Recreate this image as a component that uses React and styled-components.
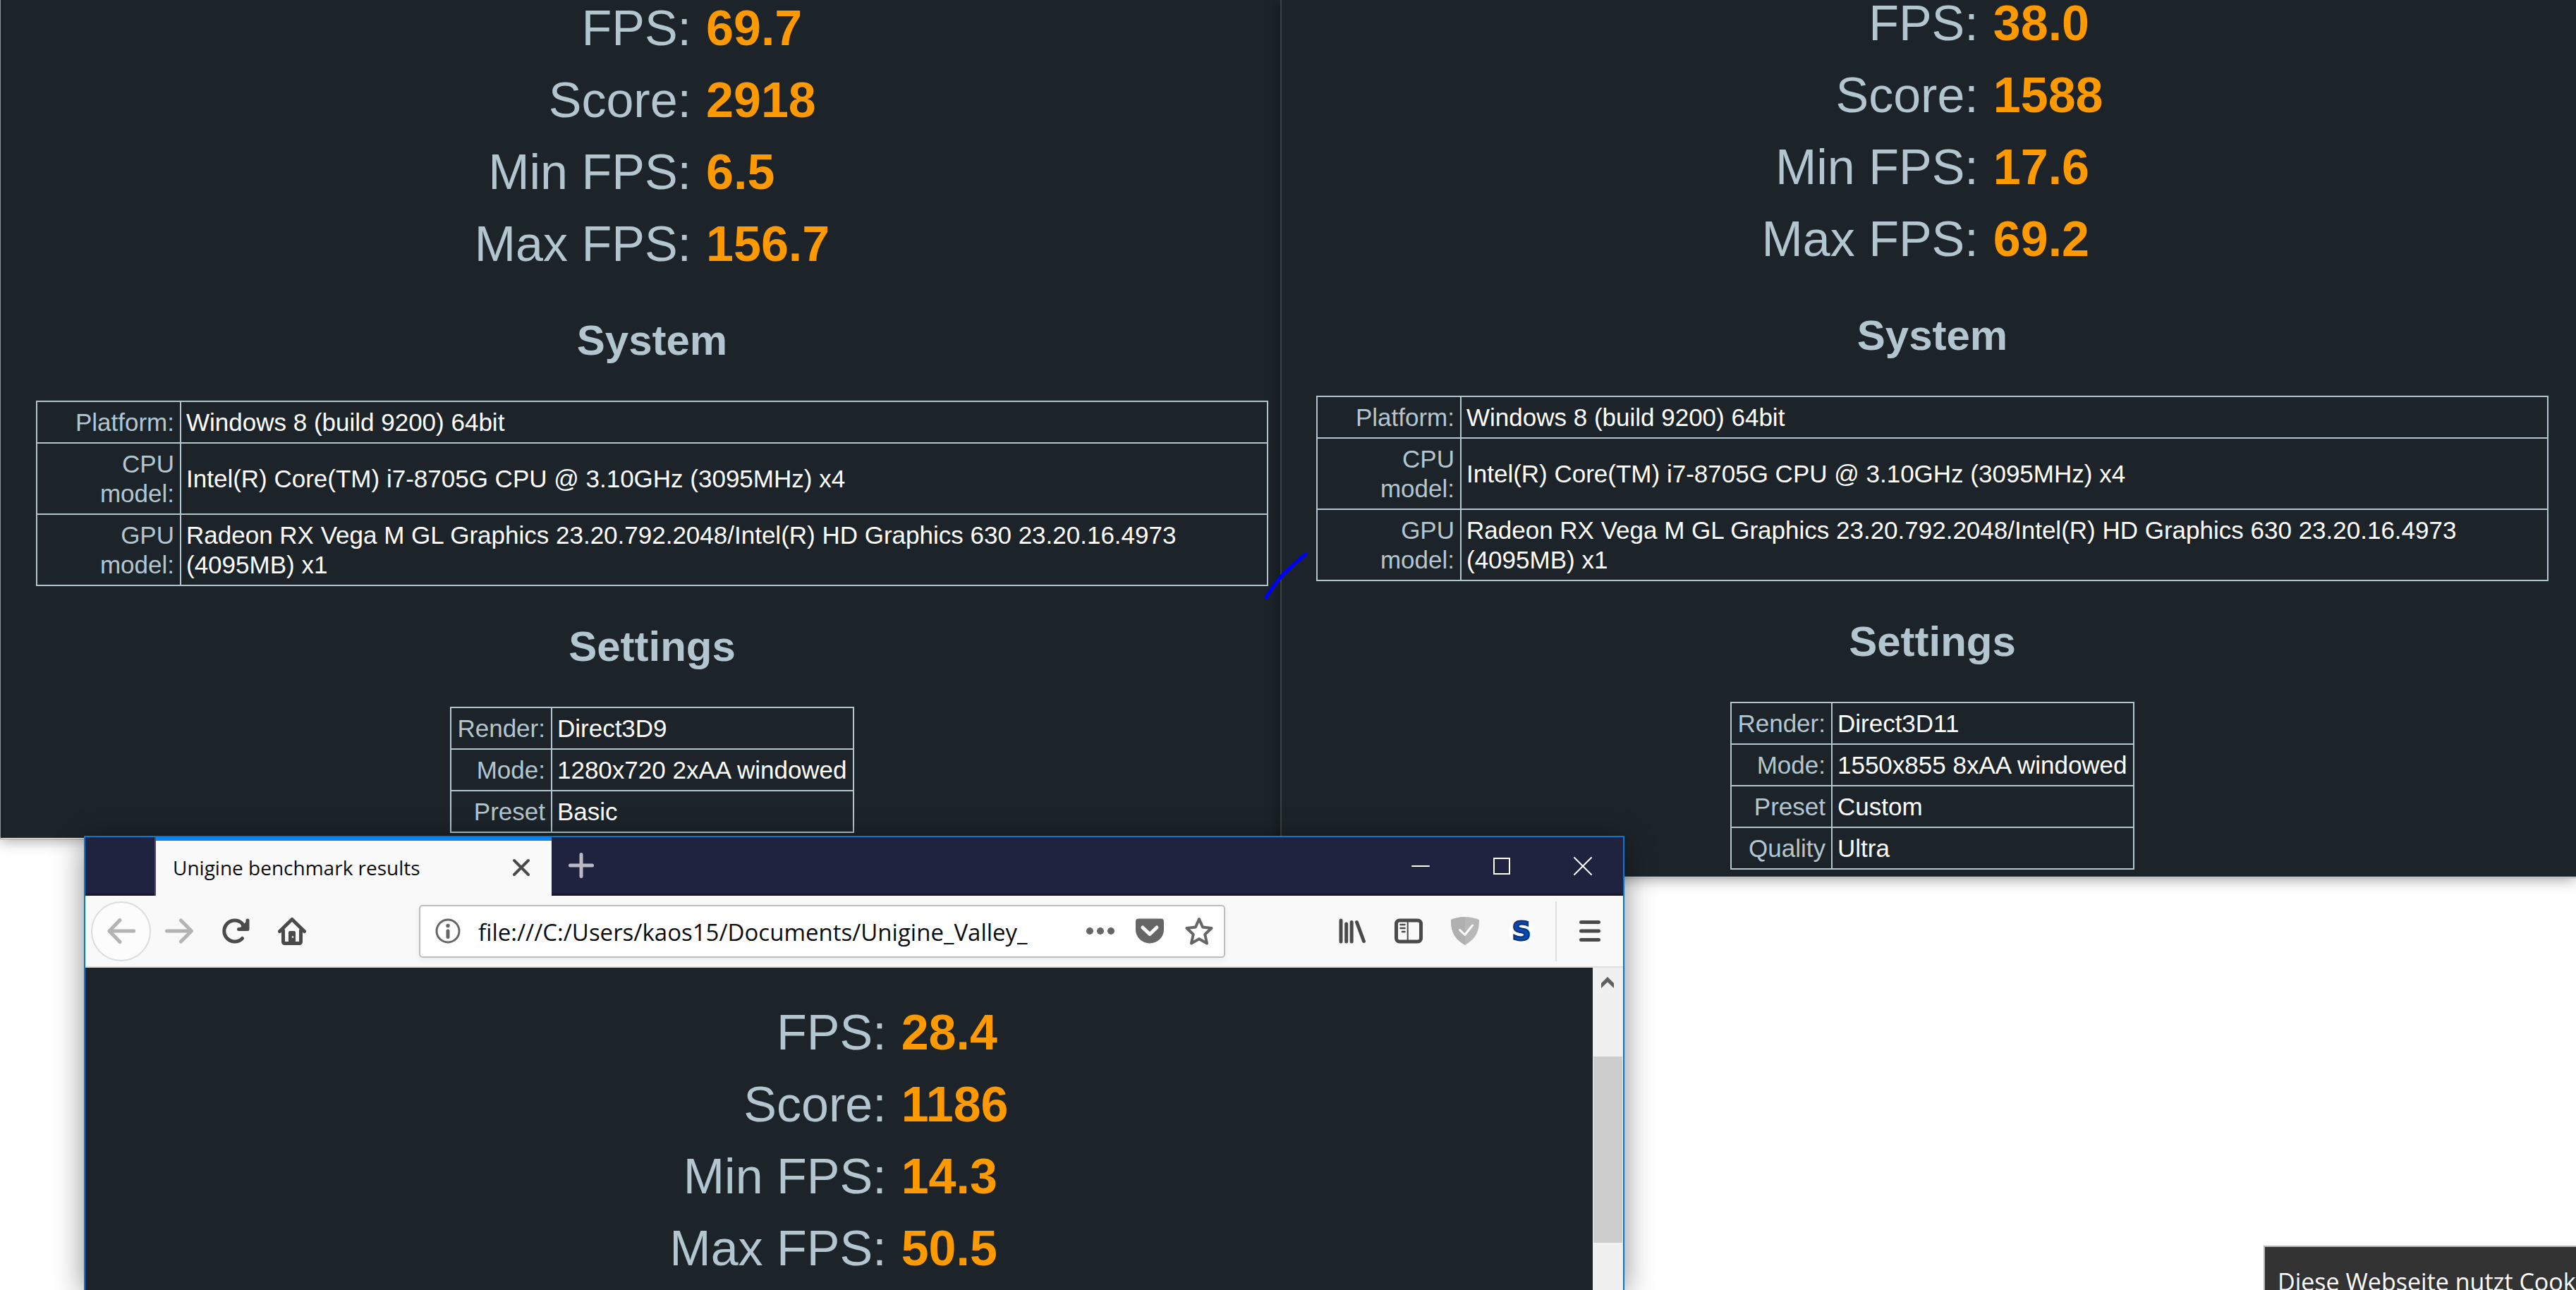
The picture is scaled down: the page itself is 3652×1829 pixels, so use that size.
import React from "react";
import styled, { createGlobalStyle } from "styled-components";

const GlobalStyle = createGlobalStyle`
  * {
    box-sizing: border-box;
  }
  body {
    margin: 0;
    background-color: #ffffff;
    font-family: "Liberation Sans", Arial, sans-serif;
  }
  button {
    padding: 0;
    border: none;
    background: none;
    font: inherit;
    cursor: pointer;
  }
`;

const Desktop = styled.main`
  position: relative;
  height: 100vh;
  overflow: hidden;
`;

const Panes = styled.div`
  display: grid;
  grid-template-columns: 1815fr 1837fr;
  align-items: start;
`;

const Pane = styled.section`
  position: relative;
  z-index: ${props => (props.$front ? 1 : 0)};
  padding: ${props => (props.$front ? "0 39px 10px 49px" : "0 17px 7px 50px")};
  border-left: ${props => (props.$front ? "2px solid #3a3f40" : "1px solid #8f9496")};
  border-bottom: 1px solid #ffffff;
  background-color: #1c242a;
  box-shadow: 0 1px 0 #999999, 0 2px 20px rgba(0, 0, 0, 0.4);
  overflow: hidden;
`;

const ScoreTable = styled.table`
  margin: ${props => props.$shift}px auto 0;
  border-collapse: collapse;
  font-size: 70px;
  line-height: 102px;
  white-space: nowrap;
`;

const ScoreLabel = styled.th`
  padding: 0 10px 0 8px;
  color: #b3c6d0;
  font-weight: 400;
  text-align: right;
`;

const ScoreValue = styled.td`
  padding: 0 8px 0 11px;
  color: #ff9900;
  font-weight: 700;
`;

const Heading = styled.h2`
  margin: 52px 0 51px;
  color: #b3c6d0;
  font-size: 60px;
  line-height: 68px;
  text-align: center;
`;

const InfoTable = styled.table`
  width: ${props => (props.$wide ? "100%" : "auto")};
  margin: 0 auto;
  border-collapse: collapse;
  font-size: 35px;
  line-height: 42px;

  th,
  td {
    padding: 8px 8px 7px;
    border: 2px solid #b3c6d0;
  }
  th {
    width: ${props => (props.$wide ? "204px" : "auto")};
    color: #b3c6d0;
    font-weight: 400;
    text-align: right;
  }
  td {
    padding-left: 7px;
    color: #ffffff;
  }
`;

const PenStroke = styled.svg`
  position: absolute;
  z-index: 2;
  top: 783px;
  left: 1792px;
`;

const Browser = styled.section`
  position: absolute;
  z-index: 3;
  top: 1185px;
  bottom: 0;
  left: 119px;
  width: 59.8%;
  display: flex;
  flex-direction: column;
  border: solid #0078d7;
  border-width: 2px 2px 0;
  background-color: #f9f9fa;
  box-shadow: 0 6px 40px rgba(0, 0, 0, 0.45);
`;

const TabStrip = styled.header`
  display: flex;
  height: 83px;
  padding-left: 100px;
  background-color: #202340;
  box-shadow: inset 0 -3px 0 #17182d;
`;

const Tab = styled.div`
  display: flex;
  align-items: center;
  justify-content: space-between;
  width: 561px;
  padding: 0 23px 3px 24px;
  border-top: 5px solid #0a84ff;
  box-shadow: -2px 0 0 #4a4c66;
  background-color: #f9f9fa;
  color: #0c0c0d;
  font-family: "Open Sans", "Noto Sans", sans-serif;
  font-size: 28px;
  white-space: nowrap;
`;

const TabClose = styled.button`
  display: flex;
  align-items: center;
  justify-content: center;
  width: 40px;
  height: 40px;
`;

const StripButton = styled.button`
  display: flex;
  align-items: center;
  justify-content: center;
  width: ${props => props.$width}px;
  height: 80px;
`;

const WindowControls = styled.div`
  display: flex;
  margin-left: auto;
`;

const Toolbar = styled.nav`
  display: flex;
  align-items: center;
  height: 102px;
  padding-left: 8px;
  border-bottom: 2px solid #dfe1e1;
`;

const ToolButton = styled.button`
  display: flex;
  align-items: center;
  justify-content: center;
  width: ${props => props.$width || 80}px;
  height: 80px;
`;

const BackButton = styled(ToolButton)`
  height: 85px;
  border: 2px solid #dcdcdc;
  border-radius: 50%;
  background-color: #fcfcfc;
`;

const AddressBar = styled.div`
  display: flex;
  flex: 1;
  align-items: center;
  height: 75px;
  margin: 0 140px;
  border: 2px solid #bdbdbd;
  border-radius: 5px;
  background-color: #ffffff;
  box-shadow: 0 3px 8px rgba(0, 0, 0, 0.06);
`;

const AddressInput = styled.input`
  flex: 1;
  min-width: 0;
  padding: 3px 4px 0;
  border: none;
  outline: none;
  background: none;
  color: #0c0c0d;
  font-family: "Open Sans", "Noto Sans", sans-serif;
  font-size: 33px;
`;

const Separator = styled.span`
  width: 2px;
  height: 85px;
  margin-left: 8px;
  background-color: #dfdfdf;
`;

const Badge = styled.span`
  width: 35px;
  height: 35px;
  border-radius: 50%;
  background-color: #ffffff;
  color: #0a47b0;
  font-family: "DejaVu Sans", sans-serif;
  font-size: 38px;
  font-weight: 700;
  line-height: 35px;
  text-align: center;
  -webkit-text-stroke: 2px #06347c;
`;

const Viewport = styled.div`
  display: flex;
  flex: 1;
  min-height: 0;
`;

const Page = styled.div`
  flex: 1;
  overflow: hidden;
  background-color: #1c242a;
`;

const Scrollbar = styled.div`
  width: 43px;
  background-color: #f0f0f0;
`;

const ScrollUp = styled.button`
  display: flex;
  align-items: center;
  justify-content: center;
  width: 43px;
  height: 42px;
  margin-bottom: 84px;
`;

const ScrollThumb = styled.div`
  height: 264px;
  margin: 0 1px;
  background-color: #cdcdcd;
`;

const CookieNotice = styled.aside`
  position: absolute;
  right: 0;
  bottom: 0;
  width: 443px;
  height: 63px;
  padding: 24px 0 0 18px;
  border: solid #b8b8b8;
  border-width: 2px 0 0 2px;
  background-color: #333333;
  color: #ffffff;
  font-family: "Open Sans", "Noto Sans", sans-serif;
  font-size: 34px;
  line-height: 50px;
  white-space: nowrap;
  overflow: hidden;
`;

const Icon = ({ color = "#4a4a4b", width = 5, children }) => (
  <svg
    width="40"
    height="40"
    viewBox="0 0 40 40"
    fill="none"
    stroke={color}
    strokeWidth={width}
    strokeLinecap="round"
    strokeLinejoin="round"
    aria-hidden="true"
  >
    {children}
  </svg>
);

const system = [
  ["Platform:", "Windows 8 (build 9200) 64bit"],
  ["CPU model:", "Intel(R) Core(TM) i7-8705G CPU @ 3.10GHz (3095MHz) x4"],
  [
    "GPU model:",
    "Radeon RX Vega M GL Graphics 23.20.792.2048/Intel(R) HD Graphics 630 23.20.16.4973 (4095MB) x1"
  ]
];

const results = {
  basic: {
    scores: [["FPS:", "69.7"], ["Score:", "2918"], ["Min FPS:", "6.5"], ["Max FPS:", "156.7"]],
    settings: [["Render:", "Direct3D9"], ["Mode:", "1280x720 2xAA windowed"], ["Preset", "Basic"]]
  },
  custom: {
    scores: [["FPS:", "38.0"], ["Score:", "1588"], ["Min FPS:", "17.6"], ["Max FPS:", "69.2"]],
    settings: [
      ["Render:", "Direct3D11"],
      ["Mode:", "1550x855 8xAA windowed"],
      ["Preset", "Custom"],
      ["Quality", "Ultra"]
    ]
  },
  valley: {
    scores: [["FPS:", "28.4"], ["Score:", "1186"], ["Min FPS:", "14.3"], ["Max FPS:", "50.5"]]
  }
};

const Scores = ({ rows, shift }) => (
  <ScoreTable $shift={shift}>
    <tbody>
      {rows.map(([label, value]) => (
        <tr key={label}>
          <ScoreLabel scope="row">{label}</ScoreLabel>
          <ScoreValue>{value}</ScoreValue>
        </tr>
      ))}
    </tbody>
  </ScoreTable>
);

const Info = ({ rows, wide }) => (
  <InfoTable $wide={wide}>
    <tbody>
      {rows.map(([label, value]) => (
        <tr key={label}>
          <th scope="row">{label}</th>
          <td>{value}</td>
        </tr>
      ))}
    </tbody>
  </InfoTable>
);

const ResultPane = ({ result, shift, front }) => (
  <Pane $front={front}>
    <Scores rows={result.scores} shift={shift} />
    <Heading>System</Heading>
    <Info rows={system} wide />
    <Heading>Settings</Heading>
    <Info rows={result.settings} />
  </Pane>
);

const BrowserTabs = () => (
  <TabStrip>
    <Tab>
      Unigine benchmark results
      <TabClose aria-label="Close tab">
        <Icon width={4}>
          <path d="M10 10 30 30M30 10 10 30" />
        </Icon>
      </TabClose>
    </Tab>
    <StripButton $width={84} aria-label="New tab">
      <Icon color="#b9bac6">
        <path d="M20 4.500v31M4.500 20h31" />
      </Icon>
    </StripButton>
    <WindowControls>
      <StripButton $width={115} aria-label="Minimize">
        <Icon color="#ffffff" width={2}>
          <path d="M9 21h24" />
        </Icon>
      </StripButton>
      <StripButton $width={115} aria-label="Maximize">
        <Icon color="#ffffff" width={2}>
          <path d="M10 10h22v22H10z" strokeLinejoin="miter" />
        </Icon>
      </StripButton>
      <StripButton $width={115} aria-label="Close">
        <Icon color="#ffffff" width={2}>
          <path d="M9 9 33 33M33 9 9 33" />
        </Icon>
      </StripButton>
    </WindowControls>
  </TabStrip>
);

const BrowserToolbar = () => (
  <Toolbar>
    <BackButton $width={85} aria-label="Back">
      <Icon color="#b3b3b3">
        <path d="M38 20H3M18 4.500 3 20l15 15.500" />
      </Icon>
    </BackButton>
    <ToolButton aria-label="Forward">
      <Icon color="#b3b3b3">
        <path d="M2.500 20H37M22.500 5 37.500 20l-15 15" />
      </Icon>
    </ToolButton>
    <ToolButton aria-label="Reload">
      <Icon>
        <path d="M29.500 9.500A15 15 0 1 0 29.500 30.500" />
        <path d="M24 17.500h12.500V5.500z" fill="#4a4a4b" stroke="none" />
        <path d="M24.500 17.500h12.500V5M30 11l6 5" />
      </Icon>
    </ToolButton>
    <ToolButton aria-label="Home">
      <Icon>
        <path d="M2.500 20.500 20 3.500l17.500 17" />
        <path d="M7.500 19v16.500a2 2 0 0 0 2 2h21a2 2 0 0 0 2-2V19" />
        <path d="M15 38V22a2 2 0 0 1 2-2h6a2 2 0 0 1 2 2v16z" fill="#4a4a4b" stroke="none" />
        <circle cx="21" cy="28.500" r="1.300" fill="#f9f9fa" stroke="none" />
      </Icon>
    </ToolButton>
    <AddressBar>
      <ToolButton $width={78} aria-label="Site information">
        <Icon color="#666666" width={3}>
          <circle cx="20" cy="20" r="16" />
          <path d="M20 20v8.500" strokeWidth="5" />
          <circle cx="20" cy="12.500" r="2.700" fill="#666666" stroke="none" />
        </Icon>
      </ToolButton>
      <AddressInput
        aria-label="Address"
        defaultValue="file:///C:/Users/kaos15/Documents/Unigine_Valley_"
      />
      <ToolButton $width={70} aria-label="Page actions">
        <svg width="42" height="40" viewBox="0 0 42 40" fill="#666666" aria-hidden="true">
          <circle cx="6" cy="20" r="5" />
          <circle cx="21" cy="20" r="5" />
          <circle cx="36" cy="20" r="5" />
        </svg>
      </ToolButton>
      <ToolButton $width={70} aria-label="Save to Pocket">
        <Icon>
          <path
            d="M4 2.500h32a4 4 0 0 1 4 4V18a20 19.500 0 0 1-40 0V6.500a4 4 0 0 1 4-4z"
            fill="#666666"
            stroke="none"
          />
          <path d="M10 15l10 9.500L30 15" stroke="#ffffff" />
        </Icon>
      </ToolButton>
      <ToolButton $width={70} aria-label="Bookmark this page">
        <Icon color="#666666" width={4}>
          <path d="M20 3l5 11.500 12.500 1.500-9.200 8.800L31 37.500l-11-6.200L9 37.500l2.700-12.700L2.500 16 15 14.500z" />
        </Icon>
      </ToolButton>
    </AddressBar>
    <ToolButton aria-label="Library">
      <Icon>
        <path d="M4 5v30M11.700 10v25M19.200 7.500V35M26.500 7.500l10 27" />
      </Icon>
    </ToolButton>
    <ToolButton aria-label="Sidebars">
      <Icon>
        <rect x="2.500" y="5" width="35" height="30" rx="4.500" />
        <path d="M18.700 5v30" strokeWidth="2" />
        <path d="M8.500 11h6M8.500 16h6M11 21h3.500" strokeWidth="2.500" />
      </Icon>
    </ToolButton>
    <ToolButton aria-label="Ad blocker">
      <Icon>
        <path
          d="M20 0C13.500 0 6.500 1.200 0 4c0 14 2.500 25.500 20 36C37.500 29.500 40 18 40 4 33.500 1.200 26.500 0 20 0z"
          fill="#b8b8b8"
          stroke="none"
        />
        <path d="M20 0C13.500 0 6.500 1.200 0 4c0 14 2.500 25.500 20 36z" fill="#b0b0b0" stroke="none" />
        <path d="M12.500 18.500l7.200 7L30.500 12" stroke="#ffffff" strokeWidth="3" />
      </Icon>
    </ToolButton>
    <ToolButton aria-label="Startpage">
      <Badge>S</Badge>
    </ToolButton>
    <Separator />
    <ToolButton $width={94} aria-label="Open menu">
      <Icon>
        <path d="M7.500 7.500h25M7.500 20h25M7.500 32.500h25" />
      </Icon>
    </ToolButton>
  </Toolbar>
);

const App = () => (
  <>
    <GlobalStyle />
    <Desktop>
      <Panes>
        <ResultPane result={results.basic} shift={-11} />
        <ResultPane result={results.custom} shift={-18} front />
      </Panes>
      <PenStroke width="64" height="70" viewBox="0 0 64 70" fill="none" aria-hidden="true">
        <path
          d="M3 64C9 54 16 45 23 36 34 24 46 14 59 3"
          stroke="#0000ff"
          strokeWidth="5"
          strokeLinecap="round"
        />
      </PenStroke>
      <Browser>
        <BrowserTabs />
        <BrowserToolbar />
        <Viewport>
          <Page>
            <Scores rows={results.valley.scores} shift={41} />
          </Page>
          <Scrollbar>
            <ScrollUp aria-label="Scroll up">
              <svg width="18" height="16" viewBox="0 0 18 16" fill="#606060" aria-hidden="true">
                <path d="M9 0l9 9v7L9 7.500 0 16V9z" />
              </svg>
            </ScrollUp>
            <ScrollThumb />
          </Scrollbar>
        </Viewport>
      </Browser>
      <CookieNotice>Diese Webseite nutzt Cookies</CookieNotice>
    </Desktop>
  </>
);

export default App;
